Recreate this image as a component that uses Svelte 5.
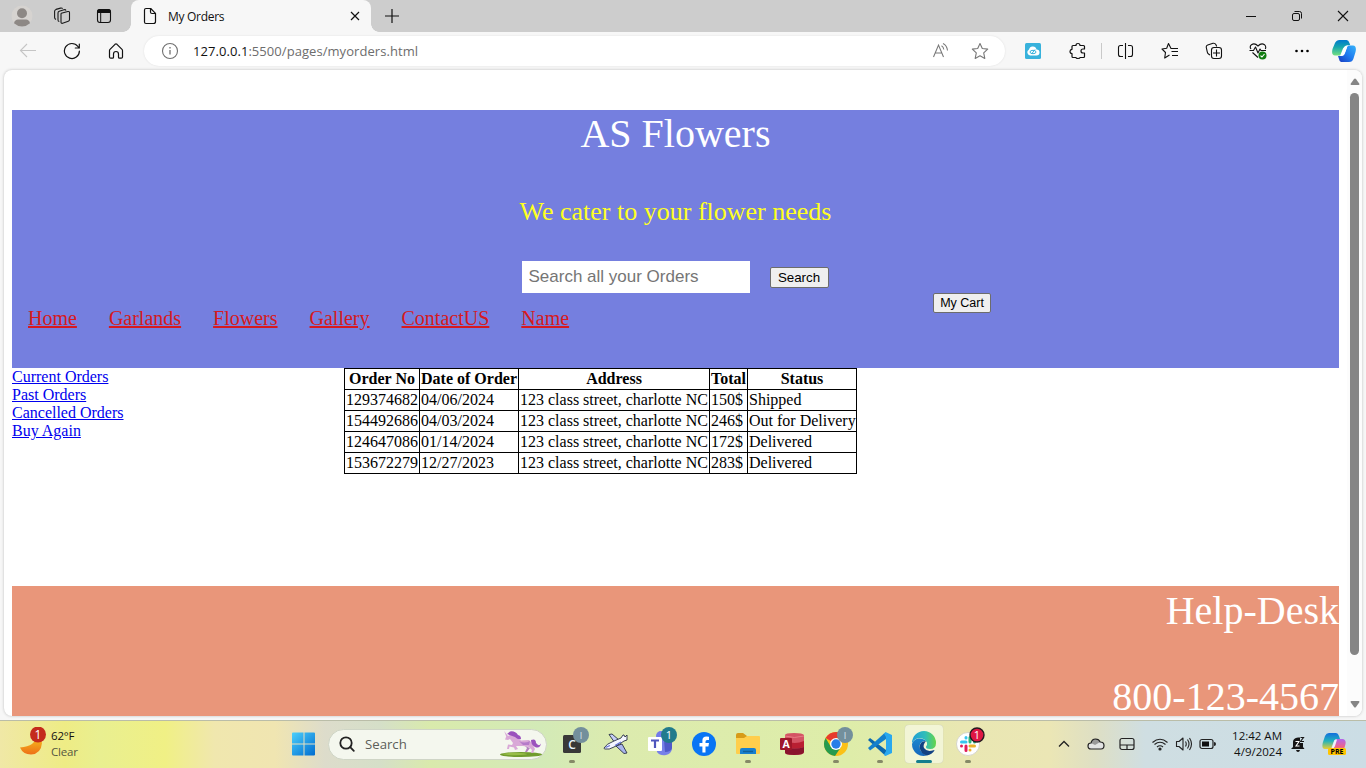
<script>
  const nav = ['Home', 'Garlands', 'Flowers', 'Gallery', 'ContactUS', 'Name'];
  const filters = ['Current Orders', 'Past Orders', 'Cancelled Orders', 'Buy Again'];
  const columns = ['Order No', 'Date of Order', 'Address', 'Total', 'Status'];
  const address = '123 class street, charlotte NC';
  const orders = [
    ['129374682', '04/06/2024', address, '150$', 'Shipped'],
    ['154492686', '04/03/2024', address, '246$', 'Out for Delivery'],
    ['124647086', '01/14/2024', address, '172$', 'Delivered'],
    ['153672279', '12/27/2023', address, '283$', 'Delivered']
  ];
</script>

<div class="screen">
  <div class="tabs">
    <svg class="avatar" width="22" height="22" viewBox="0 0 22 22"><circle cx="11" cy="11" r="10.5" fill="#d6d3d0" /><circle cx="11" cy="8.2" r="5" fill="#8d8885" /><path d="M3 18.200Q4 14.500 7 14.500H15Q18 14.500 19 18.200Q11 25 3 18.200Z" fill="#8d8885" /></svg>
    <svg class="spaces" width="18" height="18" viewBox="0 0 18 18" fill="none" stroke="#1b1b1b" stroke-width="1.1" stroke-linejoin="round"><path d="M8.300 6.200 14.800 4.500Q16.500 4.200 16.500 5.700V12.500Q16.500 13.800 15.300 14.200L9.600 16.300Q8 16.700 8 15V7Q8 6.300 8.300 6.200Z" /><path d="M6.300 14.500Q5 14.500 5 13V6Q5 4.600 6.200 4.200L11 2.700Q12.500 2.300 13 3.500" /><path d="M3 12.500Q1.600 12 1.600 10.600V4.200Q1.600 2.900 3 2.400L7.500 1.100Q9 .7 9.600 1.600" /></svg>
    <svg class="vert" width="16" height="16" viewBox="0 0 16 16"><rect x="1.500" y="1.500" width="13" height="13" rx="2.500" fill="none" stroke="#111" stroke-width="1.100" /><path d="M1 5V4Q1 1 4 1H12Q15 1 15 4V5Z" fill="#111" /><path d="M4.700 5V14" stroke="#111" /></svg>
    <div class="tab">
      <svg width="14" height="18" viewBox="0 0 14 18" fill="none" stroke="#111" stroke-width="1.200" stroke-linejoin="round"><path d="M3 1.500H7.700L12.500 6.300V14.500Q12.500 16.500 10.500 16.500H3Q1.500 16.500 1.500 15V3Q1.500 1.500 3 1.500Z" /><path d="M7.500 1.700V5Q7.500 6.500 9 6.500H12.300" /></svg>
      <span>My Orders</span>
      <svg class="close" width="10" height="10" viewBox="0 0 10 10" stroke="#111" stroke-width="1.200"><path d="M1 1 9 9M9 1 1 9" /></svg>
    </div>
    <svg class="plus" width="14" height="14" viewBox="0 0 14 14" stroke="#111" stroke-width="1.200"><path d="M7 0V14M0 7H14" /></svg>
    <div class="win">
      <svg width="12" height="12" viewBox="0 0 12 12" fill="none" stroke="#111"><path d="M1 6.500H11" /></svg>
      <svg width="12" height="12" viewBox="0 0 12 12" fill="none" stroke="#111"><rect x="1.500" y="3.500" width="7" height="7" rx="1.500" /><path d="M3.500 1.500H8.500Q10.500 1.500 10.500 3.500V8.500" /></svg>
      <svg width="12" height="12" viewBox="0 0 12 12" fill="none" stroke="#111" stroke-width="1.100"><path d="M1 1 11 11M11 1 1 11" /></svg>
    </div>
  </div>

  <div class="toolbar">
    <div class="tool"><svg width="18" height="16" viewBox="0 0 18 16" fill="none" stroke="#c5c5c5" stroke-width="1.100"><path d="M17 7.500H1.500M8 1 1.500 7.500 8 14" /></svg></div>
    <div class="tool"><svg width="18" height="18" viewBox="0 0 18 18" fill="none" stroke="#111" stroke-width="1.200" stroke-linecap="round"><path d="M16.400 9A7.500 7.500 0 1 1 14.900 4.500L16 6M16.300 2V6H12.300" /></svg></div>
    <div class="tool"><svg width="16" height="18" viewBox="0 0 16 18" fill="none" stroke="#111" stroke-width="1.200" stroke-linejoin="round"><path d="M2 7.300 7 2.300Q8 1.400 9 2.300L14 7.300Q14.500 7.800 14.500 8.500V15Q14.500 16.200 13.300 16.200H11.500Q10.500 16.200 10.500 15.200V12Q10.500 9.500 8 9.500T5.500 12V15.200Q5.500 16.200 4.500 16.200H2.700Q1.500 16.200 1.500 15V8.500Q1.500 7.800 2 7.300Z" /></svg></div>
    <div class="address">
      <svg width="18" height="18" viewBox="0 0 18 18" fill="none" stroke="#707070" stroke-width="1.100"><circle cx="9" cy="9" r="7.500" /><path d="M9 8V12.500M9 5V6.400" stroke-width="1.300" /></svg>
      <span class="url"><b>127.0.0.1</b>:5500/pages/myorders.html</span>
      <svg class="read" width="18" height="18" viewBox="0 0 18 18" fill="none" stroke="#777" stroke-width="1.050"><path d="M1.500 15 6.500 3 11.500 15M3.200 11H9.800M9.500 3.800Q11.500 5 11.800 7.500M11 1.500Q15 3.500 15.500 8.500" /></svg>
      <svg class="star" width="18" height="18" viewBox="0 0 18 18" fill="none" stroke="#777" stroke-width="1.100" stroke-linejoin="round"><path d="M9 1.500 11.300 6.500 16.700 7.100 12.700 10.900 13.800 16.400 9 13.700 4.200 16.400 5.300 10.900 1.300 7.100 6.700 6.500Z" /></svg>
    </div>
    <div class="tools">
      <div class="tool"><svg width="16" height="16" viewBox="0 0 16 16"><rect width="16" height="16" rx="1.500" fill="#38b2dc" /><path d="M5 12.500A3.200 3.200 0 0 1 4 6.500Q5 3 8 3.500 10.800 3.500 11.500 6.500A3 3 0 0 1 11.500 12.500Z" fill="white" /><ellipse cx="8" cy="9" rx="3" ry="1.700" stroke="#38b2dc" fill="none" /><path d="M6.500 11 10 6.500" stroke="#38b2dc" fill="none" /></svg></div>
      <div class="tool"><svg width="18" height="18" viewBox="0 0 18 18" fill="none" stroke="#111" stroke-width="1.200" stroke-linejoin="round"><path d="M5 3.500H8Q8 1.500 10 1.500T12 3.500H15.500Q16.500 3.500 16.500 4.500V7H15Q13 7 13 9T15 11H16.500V14.500Q16.500 15.500 15.500 15.500H12Q12 16.500 10 16.500T8 15.500H5Q4 15.500 4 14.500V11.500Q2 11.500 2 9.500T4 7.300V4.500Q4 3.500 5 3.500Z" /></svg></div>
      <i class="sep"></i>
      <div class="tool"><svg width="18" height="18" viewBox="0 0 18 18" fill="none" stroke="#111" stroke-width="1.100"><path d="M6 3.500H3.500Q1.500 3.500 1.500 5.500V12.500Q1.500 14.500 3.500 14.500H6M11 3.500H13.500Q15.500 3.500 15.500 5.500V12.500Q15.500 14.500 13.500 14.500H11M8.500 1V17" /></svg></div>
      <div class="tool"><svg width="18" height="18" viewBox="0 0 18 18" fill="none" stroke="#111" stroke-width="1.100" stroke-linejoin="round"><path d="M17 6.500H10L7.500 1.500 5.700 6.200 1 7 4.500 10.500 3.700 16 8.500 13M10.500 9.500H17M11 13.500H17" /></svg></div>
      <div class="tool"><svg width="18" height="18" viewBox="0 0 18 18" fill="none" stroke="#111" stroke-width="1.100"><path d="M5 13 3.500 12Q2.500 11.500 2.200 9.700L1.200 5Q1.200 3.500 2.700 3L8 1.300Q10 .9 11 2.800L11.700 4.500" /><rect x="6.500" y="5.500" width="10" height="11" rx="2.500" /><path d="M11.500 7.500V14.500M8 11H15" /></svg></div>
      <div class="tool"><svg width="18" height="18" viewBox="0 0 18 18" fill="none" stroke="#111" stroke-width="1.100" stroke-linejoin="round"><path d="M2 7Q.2 4.700 2.500 2.700 5.600.5 9 4 12.400.5 15.500 2.700 17.500 4.600 16.300 7M3.500 10.500 9 15.500M.5 8.500H4.500L6.500 5 9 11 11 7 12 8.500H17" /><circle cx="13.500" cy="13.500" r="4" fill="#107c10" stroke="none" /><path d="M11.500 13.700 13 15 15.500 12" stroke="white" /></svg></div>
      <div class="tool"><svg width="16" height="4" viewBox="0 0 16 4"><circle cx="2.500" cy="2" r="1.300" /><circle cx="8" cy="2" r="1.300" /><circle cx="13.500" cy="2" r="1.300" /></svg></div>
      <div class="tool copilot"><svg width="24" height="24" viewBox="0 0 24 24"><defs><linearGradient id="cpA" x1="0" y1="0" x2="0" y2="1"><stop stop-color="#0078cd" /><stop offset=".45" stop-color="#16a6ad" /><stop offset="1" stop-color="#75df80" /></linearGradient><linearGradient id="cpB" x1="1" y1="0" x2="0" y2="1"><stop stop-color="#37b4fa" /><stop offset=".5" stop-color="#207cf0" /><stop offset="1" stop-color="#1839be" /></linearGradient></defs><path d="M7.500 1H14.500Q16.500 1 17.500 4L18.200 6Q13 5.500 12 9L9.500 16.500H3Q-1 16.500.5 10L3 4Q4.500 1 7.500 1Z" fill="url(#cpA)" /><path d="M14.500 7H17L14 16Q13 18 10 17H8L11 9.500Q12 7 14.500 7Z" fill="#fff" /><path d="M16.500 6.500H21Q25 7 23.500 13L21.500 19.500Q20.500 23 17 23H9Q7.500 22.800 7 20L6 17H10Q12 17 13 13.500L15 8.500Q15.500 6.700 16.500 6.500Z" fill="url(#cpB)" /><path d="M12.500 8.500Q13.500 6.800 15.500 6.800L13 14Q12.500 16 10 16.500Z" fill="#fff" /></svg></div>
    </div>
  </div>

  <div class="view">
    <div class="page">
      <header>
        <h1>AS Flowers</h1>
        <p>We cater to your flower needs</p>
        <div class="find"><input placeholder="Search all your Orders" /><button>Search</button></div>
        <div class="bottom">
          <nav>{#each nav as item}<a href="#top">{item}</a>{/each}</nav>
          <button class="cart">My Cart</button>
        </div>
      </header>
      <main>
        <aside>{#each filters as item}<a href="#top">{item}</a>{/each}</aside>
        <table>
          <colgroup><col class="no" /><col class="date" /><col class="addr" /><col class="total" /><col class="status" /></colgroup>
          <thead><tr>{#each columns as c}<th>{c}</th>{/each}</tr></thead>
          <tbody>{#each orders as row}<tr>{#each row as cell}<td>{cell}</td>{/each}</tr>{/each}</tbody>
        </table>
      </main>
      <footer><div>Help-Desk</div><div>800-123-4567</div></footer>
    </div>
    <div class="scroll">
      <svg width="10" height="8" viewBox="0 0 10 8"><path d="M4 1Q5 0 6 1L9.500 6Q9.500 7 8.500 7H1.500Q.5 7 .5 6Z" fill="#858585" /></svg>
      <i></i>
      <svg width="10" height="8" viewBox="0 0 10 8"><path d="M1.500 1H8.500Q9.500 1 9.500 2L6 7Q5 8 4 7L.5 2Q.5 1 1.500 1Z" fill="#858585" /></svg>
    </div>
  </div>

  <div class="taskbar">
    <div class="weather">
      <svg width="28" height="34" viewBox="0 0 28 34"><defs><linearGradient id="moon" x1="0" y1="0" x2="0" y2="1"><stop stop-color="#f6c21c" /><stop offset="1" stop-color="#ee7018" /></linearGradient></defs><path d="M17 9Q17 19 1 20.500 4 27.500 12 27.500 22 27 23 16 22 10 17 9Z" fill="url(#moon)" /><circle cx="19" cy="7.500" r="8" fill="#c42b1c" /><text x="19" y="12" fill="white" font-size="12" text-anchor="middle">1</text></svg>
      <div><span>62°F</span><span>Clear</span></div>
    </div>
    <svg class="start" width="24" height="24" viewBox="0 0 24 24"><defs><linearGradient id="winG" gradientUnits="userSpaceOnUse" x1="0" y1="0" x2="22" y2="24"><stop stop-color="#4dd0fc" /><stop offset="1" stop-color="#006dd0" /></linearGradient></defs><path d="M1 .5H11.500V11.500H0V1.500Q0 .5 1 .5ZM12.500.5H22Q23 .5 23 1.500V11.500H12.500ZM0 12.500H11.500V23.500H1Q0 23.500 0 22.500ZM12.500 12.500H23V22.500Q23 23.500 22 23.500H12.500Z" fill="url(#winG)" /></svg>
    <div class="search">
      <svg width="16" height="16" viewBox="0 0 16 16" fill="none" stroke="#222" stroke-width="1.800" stroke-linecap="round"><circle cx="7" cy="7" r="5.700" /><path d="M11.200 11.200 14.800 14.800" /></svg>
      <span>Search</span>
      <svg width="44" height="28" viewBox="0 0 44 28"><ellipse cx="22" cy="24.500" rx="21" ry="2.500" fill="#719c2d" /><ellipse cx="16" cy="24" rx="12" ry="1.200" fill="#97bd47" /><path d="M9 6 5.200 1 7.200 6.500 6 9.500 9 10 11 9 14 13 13 15 9 14.500 8 19 10 19 10.500 16.500 15 17.500 16 20 19 19 17 16 24 16 30 17 33 20 32 23H34L36 19 33 13 30 10 22 10.500 17 7 13 4Z" fill="#d9a8d7" /><path d="M8 4 11 1.500Q16 .5 19 5 22 5.500 22 9 19 10 16 7 12 5.500 8 4ZM32 10Q37 8 37 13 40 17 42 13.500 41 19 36 17 32 15 32 10Z" fill="#9b52bd" /><path d="M20 11Q25 14 31 11L30 15 24 15Z" fill="#b57bc9" /><path d="M26 16 28 18 26 22H28L31 18" fill="#b481c0" /></svg>
    </div>
    <div class="apps">
      <div class="app run"><svg viewBox="0 0 40 40"><rect x="11" y="12" width="18" height="18" rx="1.500" fill="#383838" /><text x="20" y="25.500" font-size="12" font-weight="600" fill="#e8f6ff" text-anchor="middle">C</text><circle cx="29" cy="12" r="8" fill="#738f9c" /><text x="29" y="15.500" font-size="9" fill="#dbe7ec" text-anchor="middle">I</text></svg></div>
      <div class="app"><svg viewBox="0 0 40 40"><g stroke="#283045" stroke-width=".9" stroke-linejoin="round"><path d="M13 11.500 16 11 23 17 19 20Z" fill="#c5cdf7" /><path d="M20 23 26 21 31 30 28 30.500Z" fill="#a9b5ed" /><path d="M8 25Q10 21 18 18L25 15 27 12H28L29 14 31 12V17L28 18Q24 21 18 24 13 27 9 26 8 26 8 25Z" fill="#f4f6ff" /></g><path d="M9.500 24.500 14 22.500M19 22.500 25 19" stroke="#6472d5" stroke-width="1.300" /></svg></div>
      <div class="app"><svg viewBox="0 0 40 40"><circle cx="21" cy="13" r="5" fill="#737bea" /><path d="M16 17H28Q32 17 32 21V26Q31 31 26 32 20 33 17 29Z" fill="#7780e8" /><path d="M24 17H32V25Q31 29 25 29Z" fill="#5059c9" /><rect x="8" y="14" width="14" height="14" rx="1" fill="#fff" /><path d="M11 17.500H19M15 17.500V25" stroke="#4f55bd" stroke-width="2.200" /><circle cx="29" cy="12" r="8" fill="#217b8c" /><text x="29" y="16" font-size="11" fill="#fff" text-anchor="middle">1</text></svg></div>
      <div class="app"><svg viewBox="0 0 40 40"><circle cx="20" cy="21" r="12" fill="#0875f5" /><path d="M18.400 29.500V23.500H15.500V20H18.400V17.500Q18.400 13.500 22.500 13.500L25 13.800V17H23Q21.500 17 21.500 18.700V20H25L24.400 23.500H21.500V29.500Z" fill="white" /></svg></div>
      <div class="app run"><svg viewBox="0 0 40 40"><path d="M8 12Q8 10 10 10H15L19 13H25Q27 13 27 15H8Z" fill="#d79b19" /><path d="M8 15H16L19 13H31Q32 13 32 14V30Q32 31 31 31H9Q8 31 8 30Z" fill="#ffce4c" /><path d="M12 31V27Q12 25 14 25H26Q28 25 28 27V31Z" fill="#1880cf" /><path d="M15 28.500H25" stroke="#116099" stroke-width="1.500" /></svg></div>
      <div class="app"><svg viewBox="0 0 40 40"><path d="M13 12Q13 10 22 10T32 12V29Q32 32 22 32T13 29Z" fill="#d45464" /><path d="M13 18Q23 22 32 18V24Q23 27 13 24Z" fill="#b91f32" /><path d="M13 24Q23 27 32 24V29Q32 32 22 32T13 29Z" fill="#89132d" /><path d="M13 13Q22 16 32 13" stroke="#e87c84" fill="none" /><rect x="8" y="15" width="12" height="12" rx="1" fill="#9e172a" /><text x="14" y="25" font-size="10.500" font-weight="700" fill="white" text-anchor="middle">A</text></svg></div>
      <div class="app run"><svg viewBox="0 0 40 40"><circle cx="20" cy="21" r="12" fill="#fbc116" /><path d="M20 21 9.600 15A12 12 0 0 1 30.400 15H20Z" fill="#e63b2e" /><path d="M9.600 15A12 12 0 0 0 19 33L25 24 15 24Z" fill="#269b4e" /><circle cx="20" cy="21" r="6" fill="#fff" /><circle cx="20" cy="21" r="4.700" fill="#287ee8" /><circle cx="29" cy="12" r="8" fill="#738f9c" /><text x="29" y="15.500" font-size="9" fill="#dbe7ec" text-anchor="middle">I</text></svg></div>
      <div class="app run"><svg viewBox="0 0 40 40"><path d="M8 17 10 15 26 27V32L24 31.500Z" fill="#0b67ad" /><path d="M8 25 24 10.500 26 10V16L10 27.500Z" fill="#1480cc" /><path d="M25.500 9 32 12V30L25.500 33Q24.500 33 24 31.500L26 28V14L24 10.500Z" fill="#29a8ef" /></svg></div>
      <div class="app active"><svg viewBox="0 0 40 40"><defs><linearGradient id="edgeT"><stop stop-color="#209ed8" /><stop offset=".55" stop-color="#30bdb9" /><stop offset="1" stop-color="#66d548" /></linearGradient><linearGradient id="edgeB" x1="0" y1="0" x2="0" y2="1"><stop stop-color="#1b86ce" /><stop offset="1" stop-color="#1667bd" /></linearGradient></defs><path d="M8 20A12 12 0 0 1 32 20Q32 26 26 26 21.500 26 22 23.500 23.500 22 23 19.500 20 14 13 15.500 9.500 16.500 8 20Z" fill="url(#edgeT)" /><path d="M8 21Q9.500 16 15 15.500 20 15.500 22 18 16 18 15.500 23.500 16 30 23 32.500 13 34.500 9 26 8 24 8 21Z" fill="url(#edgeB)" /><path d="M22 18Q16 18 15.500 24 16.500 31 23 32.500 28 31.500 30.500 27.500 30.500 26.800 29.500 27.200 23 29.500 20 25 18.500 22 22 18Z" fill="#124183" /></svg></div>
      <div class="app run"><svg viewBox="0 0 40 40"><circle cx="20" cy="21" r="11.500" fill="#fff" stroke="#c7c7c1" stroke-width=".7" /><g stroke-width="3" stroke-linecap="round"><path d="M13.500 19H18M18 14.500V15" stroke="#36c5f0" /><path d="M22 14.500V19M26.500 19V19" stroke="#2eb67d" /><path d="M22 23H26.500M22 27V27" stroke="#ecb22e" /><path d="M18 23V27.500M13.500 23V23" stroke="#e01e5a" /></g><circle cx="29" cy="12" r="7" fill="#df1743" stroke="#241a20" stroke-width="1.400" /><text x="29" y="16" font-size="11" fill="white" text-anchor="middle">1</text></svg></div>
    </div>
    <div class="tray">
      <svg class="chev" width="12" height="8" viewBox="0 0 12 8" fill="none" stroke="#222" stroke-width="1.300"><path d="M1 6.500 6 1.500 11 6.500" /></svg>
      <svg class="cloud" width="18" height="14" viewBox="0 0 18 14"><path d="M4 12Q1 12 1 9T4 6Q5 2 8.500 2 12 2 13.200 5 17 5 17 8.500T14 12Z" fill="#e2e3e3" /><path d="M4 6Q5 2 8.500 2 12 2 13.200 5L8 8Z" fill="#999" /><path d="M4 12Q1 12 1 9T4 6Q5 2 8.500 2 12 2 13.200 5 17 5 17 8.500T14 12Z" fill="none" stroke="#222" stroke-width="1.200" /></svg>
      <svg class="pad" width="16" height="14" viewBox="0 0 16 14" fill="none" stroke="#222" stroke-width="1.200"><rect x="1" y="1.500" width="14" height="11" rx="2" /><path d="M1 8H15M8 8V12.500" /></svg>
      <svg class="wifi" width="18" height="14" viewBox="0 0 18 14" fill="none" stroke="#222" stroke-width="1.200"><path d="M1.500 5.500Q9-1 16.500 5.500M3.500 7.500Q9 3 14.500 7.500M6 10Q9 7.500 12 10" /><circle cx="9" cy="12" r="1" fill="#222" /></svg>
      <svg class="vol" width="18" height="16" viewBox="0 0 18 16" fill="none" stroke="#222" stroke-width="1.100" stroke-linejoin="round"><path d="M1.500 5.500H4L8 2V14L4 10.500H1.500ZM10.500 5.500Q12 8 10.500 10.500M12.500 3.500Q15.500 8 12.500 12.500M14.500 2Q18.500 8 14.500 14" /></svg>
      <svg class="bat" width="18" height="12" viewBox="0 0 18 12"><rect x="1" y="1.500" width="13" height="9" rx="2" fill="none" stroke="#222" stroke-width="1.200" /><rect x="3" y="3.500" width="7" height="5" fill="#111" /><path d="M15 4Q17 4 17 6T15 8Z" fill="#222" /></svg>
      <div class="clock"><span>12:42 AM</span><span>4/9/2024</span></div>
      <svg class="bell" width="16" height="18" viewBox="0 0 16 18"><path d="M3 12V7Q3 3 8 2.500H10V8H13V12L14.500 14H1Z" fill="#151515" /><path d="M6 15H10Q9.500 17 8 17T6 15Z" fill="#151515" /><path d="M5.500 6.500H9L6 11H9.500" stroke="#fff" stroke-width="1.100" fill="none" /><path d="M10.500 2.500H13.500L10.500 6.500H14" stroke="#151515" stroke-width="1.100" fill="none" /></svg>
      <svg class="pre" width="24" height="24" viewBox="0 0 24 24"><defs><linearGradient id="preA" x1="0" y1="0" x2="0" y2="1"><stop stop-color="#136fde" /><stop offset=".5" stop-color="#22b3bc" /><stop offset="1" stop-color="#ecce32" /></linearGradient><linearGradient id="preB" x1="0" y1="0" x2="0" y2="1"><stop stop-color="#b166ed" /><stop offset=".6" stop-color="#ef6488" /><stop offset="1" stop-color="#f9a45a" /></linearGradient></defs><path d="M7 1H14Q16 1 17 4L18 7H15Q12.500 7 11.500 10L9 17H3Q-.5 17 .7 11L3 4Q4.300 1 7 1Z" fill="url(#preA)" /><path d="M15 7H21Q25 8 23 14L21 20H8Q12 18 13 12 13.500 7 15 7Z" fill="url(#preB)" /><path d="M12.500 8.500Q13 7.500 15 7.500L13 14 11 17H9.500Z" fill="#eef2fa" /><rect x="6" y="16" width="18" height="7" rx="1.500" fill="#ffc400" /><text x="15" y="22.200" font-size="7" font-weight="700" text-anchor="middle">PRE</text></svg>
    </div>
  </div>
</div>

<style>
  :global(body) { margin: 0; overflow: hidden; }
  * { box-sizing: border-box; }
  svg { display: block; flex: none; }
  .screen { width: 1366px; height: 768px; display: flex; flex-direction: column; background: #f7f7f7; font-family: "Open Sans", "Noto Sans", sans-serif; color: #111; overflow: hidden; }
  .tabs { height: 32px; flex: none; background: #cdcdcd; display: flex; align-items: center; padding-left: 11px; }
  .spaces { margin-left: 20px; }
  .vert { margin-left: 25px; }
  .tab { width: 240px; height: 32px; margin-left: 19px; background: #f7f7f7; border-radius: 8px 8px 0 0; display: flex; align-items: center; padding-left: 12px; font-size: 12px; letter-spacing: -.3px; }
  .tab::before, .tab::after { content: ""; width: 8px; height: 8px; align-self: flex-end; flex: none; }
  .tab::before { margin-left: -20px; margin-right: 12px; background: radial-gradient(circle at 0 0, #cdcdcd 7.500px, #f7f7f7 8px); }
  .tab::after { margin-right: -8px; background: radial-gradient(circle at 100% 0, #cdcdcd 7.500px, #f7f7f7 8px); }
  .tab span { margin-left: 11px; }
  .close { margin-left: auto; margin-right: 11px; }
  .plus { margin-left: 14px; }
  .win { margin-left: auto; display: flex; gap: 34px; padding-right: 17px; }
  .toolbar { height: 38px; flex: none; display: flex; align-items: center; padding-left: 6px; }
  .tool { width: 44px; display: flex; justify-content: center; }
  .address { width: 861px; height: 30px; margin-left: 6px; background: white; border-radius: 15px; box-shadow: 0 0 2px #ddd; display: flex; align-items: center; padding-left: 17px; }
  .url { margin-left: 14px; font-size: 13px; letter-spacing: .06px; color: #6d6d6d; white-space: nowrap; }
  .url b { font-weight: 400; color: #111; }
  .read { margin-left: auto; }
  .star { margin: 0 16px 0 21px; }
  .tools { display: flex; align-items: center; margin-left: 6px; }
  .sep { width: 1px; height: 16px; background: #c9c9c9; margin: 0 2px; }
  .copilot { width: 40px; }
  .view { height: 646px; flex: none; margin: 0 4px; background: white; border-radius: 8px; box-shadow: 0 0 3px #bbb; display: flex; overflow: hidden; }
  .page { width: 1327px; height: 606px; margin: 40px 0 0 8px; font: 16px/18px "Liberation Serif", serif; color: black; flex: none; }
  header { height: 258px; background: #757fdf; display: flex; flex-direction: column; align-items: center; }
  h1 { margin: 0; color: white; font-weight: 400; font-size: 40px; line-height: 47px; }
  header p { margin: 40px 0 0; color: #ff2; font-size: 26px; line-height: 30px; }
  .find { display: flex; margin: 34px 0 0 -1px; gap: 20px; align-items: center; }
  input { width: 228px; height: 32px; border: 0; padding: 0 7px; font: 17px "Liberation Sans", sans-serif; }
  input::placeholder { color: #757575; }
  button { border: 1px solid #6c6c6c; border-radius: 2px; background: #efefef; padding: 0; color: black; font: 13.333px "Liberation Sans", sans-serif; width: 59px; height: 21px; }
  .bottom { width: 100%; display: flex; align-items: flex-start; }
  nav { display: flex; padding: 13px 0 0; width: 921px; font-size: 20px; line-height: 24px; }
  nav a { padding: 0 16px; color: #d71920; }
  .cart { width: 58px; height: 20px; font-size: 12.500px; }
  main { height: 218px; display: flex; align-items: flex-start; }
  aside { width: 332px; display: flex; flex-direction: column; align-items: flex-start; }
  aside a { color: #00e; }
  table { width: 513px; table-layout: fixed; border-collapse: collapse; white-space: nowrap; }
  th, td { border: 1px solid black; padding: 1px; height: 21px; }
  .no { width: 75px; } .date { width: 99px; } .addr { width: 191px; } .total { width: 38px; } .status { width: 109px; }
  footer { background: #e9967a; height: 130px; color: white; text-align: right; font-size: 40px; line-height: 36px; display: flex; flex-direction: column; gap: 50px; padding-top: 7px; }
  .scroll { margin-left: auto; width: 15px; padding: 8px 0; background: #fcfcfc; display: flex; flex-direction: column; align-items: center; }
  .scroll i { width: 9px; height: 562px; border-radius: 5px; background: #858585; margin: 7px 0 45px; }
  .taskbar { height: 48px; flex: none; margin-top: 4px; border-top: 1px solid #babda8; padding-bottom: 1px; display: flex; align-items: center; background: linear-gradient(90deg, #f0e8a6 0, #eeec85 65px, #e9ef90 100px, #f0f085 165px, #f0e7ae 215px, #f0e5b1 275px, #dddccb 325px, #d5dfc8 380px, #d9eaac 430px, #d3eab7 540px, #dcebae 620px, #deeda9 850px, #e9e7b2 960px, #ebe6b5 1050px, #dedfc4 1095px, #cfdee2 1145px, #cbdde5 1366px); font-size: 12px; }
  .weather { width: 291px; display: flex; align-items: center; padding-left: 19px; gap: 4px; }
  .weather div { display: flex; flex-direction: column; font-size: 11.500px; line-height: 16px; letter-spacing: -.2px; padding-bottom: 1px; }
  .weather span + span { color: #555741; }
  .start { margin-left: 1px; }
  .search { width: 219px; height: 31px; border: 1px solid #cfd5c6; border-radius: 16px; margin-left: 12px; background: #f4f7ee; display: flex; align-items: center; padding: 0 3px 0 10px; }
  .search span { margin: 0 auto 0 10px; font-size: 13.200px; color: #5c5e59; }
  .apps { display: flex; gap: 6px; margin-left: 6px; }
  .app { width: 38px; height: 38px; display: grid; border-radius: 4px; }
  .app > svg, .app::after { grid-area: 1 / 1; }
  .app svg { width: 40px; height: 40px; margin: -2px -1px 0; overflow: visible; }
  .app { grid-template: 38px / 38px; }
  .run::after, .active::after { content: ""; width: 6px; height: 3px; border-radius: 2px; background: #858967; align-self: end; justify-self: center; }
  .active { background: #f2f5d6; box-shadow: 0 0 1px #bbc; }
  .active::after { width: 16px; background: #147e8d; }
  .tray { display: flex; align-items: center; margin-left: auto; padding: 0 20px 1px 0; }
  .cloud { margin-left: 17px; } .pad { margin-left: 14px; } .wifi { margin-left: 16px; } .vol { margin-left: 6px; } .bat { margin-left: 6px; }
  .clock { width: 65px; display: flex; flex-direction: column; align-items: flex-end; line-height: 16px; font-size: 11.500px; white-space: nowrap; }
  .bell { margin-left: 8px; } .pre { margin-left: 16px; }
</style>
